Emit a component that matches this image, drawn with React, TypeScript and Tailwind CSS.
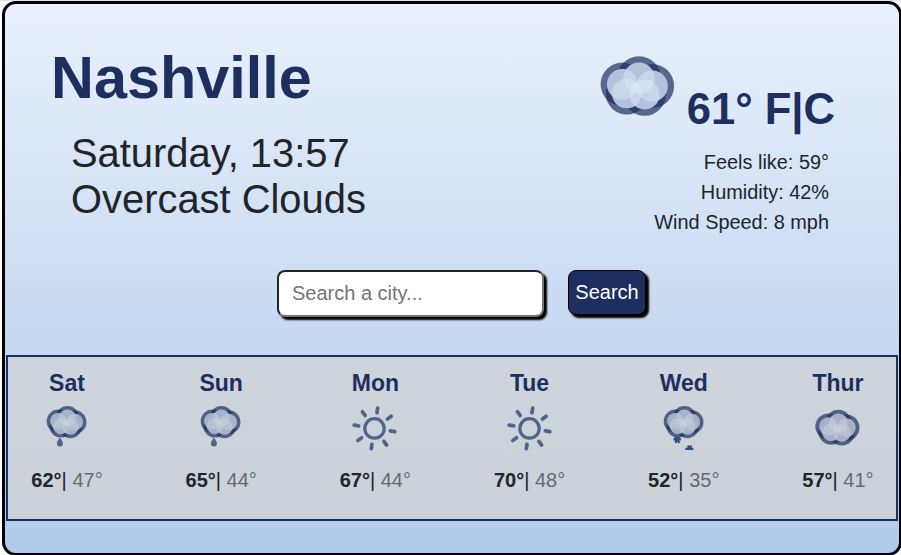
import React from "react";

const LOBES = [
  { x: 49, y: 33.3, r: 15.7 },
  { x: 32.3, y: 39.3, r: 15.4 },
  { x: 62.2, y: 41, r: 15.6 },
  { x: 36.8, y: 48.5, r: 14.8 },
  { x: 54.6, y: 49.5, r: 15 },
];

function Cloud({ size, className = "", dim = false, precipitation }: { size: number; className?: string; dim?: boolean; precipitation?: "rain" | "snow" }) {
  return (
    <svg width={size} height={size} viewBox="0 0 100 100" className={className}>
      {LOBES.map((c, i) => (
        <circle key={i} cx={c.x} cy={c.y} r={c.r + 6.3} fill="#1c2f5f" opacity={0.7} />
      ))}
      {LOBES.map((c, i) => (
        <circle key={i} cx={c.x} cy={c.y} r={c.r} fill={dim ? "#8492b0" : "#8d9dc0"} />
      ))}
      {LOBES.map((c, i) => (
        <circle key={i} cx={c.x} cy={c.y} r={c.r} fill={dim ? "#cdd4df" : "#e0eafa"} opacity={0.48} />
      ))}
      {precipitation === "rain" && <path d="M35 70c3 4 5.500 7 5.500 10.500a5.500 5.500 0 0 1-11 0c0-3.500 2.500-6.500 5.500-10.500Z" fill="#51658d" />}
      {precipitation === "snow" && (
        <g stroke="#344a79" strokeWidth="4">
          <path d="M28.500 73h14M32 67.500l7.500 12M39.500 67.500l-7.500 12" />
          <path d="M50.500 90.500h15M55 84.500l5.500 7.500M62 84.500l-5.500 7.500" />
        </g>
      )}
    </svg>
  );
}

function Sun() {
  return (
    <svg width="50" height="50" viewBox="0 0 50 50" fill="none" stroke="#506389">
      <g transform="translate(-0.5 0.4)">
        <circle cx="25" cy="25" r="9.7" strokeWidth="3.2" />
        <g transform="rotate(9 25 25)" strokeWidth="3.7" strokeLinecap="round">
          {[0, 45, 90, 135, 180, 225, 270, 315].map((a) => (
            <path key={a} d="M25 4.400V9" transform={`rotate(${a} 25 25)`} />
          ))}
        </g>
      </g>
    </svg>
  );
}

const DAYS = [
  { day: "Sat", icon: "rain", high: 62, low: 47 },
  { day: "Sun", icon: "rain", high: 65, low: 44 },
  { day: "Mon", icon: "sun", high: 67, low: 44 },
  { day: "Tue", icon: "sun", high: 70, low: 48 },
  { day: "Wed", icon: "snow", high: 52, low: 35 },
  { day: "Thur", icon: "cloud", high: 57, low: 41 },
];

function DayIcon({ kind }: { kind: string }) {
  if (kind === "sun") return <Sun />;
  if (kind === "cloud") return <Cloud size={60} dim className="ml-[3px] shrink-0" />;
  return <Cloud size={54} dim precipitation={kind === "rain" ? "rain" : "snow"} className="-mt-[3px] ml-[2px] shrink-0" />;
}

export default function App() {
  return (
    <div className="h-[555px] w-[901px] overflow-hidden border-t border-[#dee2e6] bg-white pl-[2px] font-['Liberation_Sans',Arial,sans-serif] text-[#212529]">
      <main className="flex h-[555px] w-[900px] flex-col rounded-[14px] border-[3px] border-black bg-[linear-gradient(#e9f0fc,#b0cbea)]">
        <header className="flex h-[266px] shrink-0 justify-between pr-[67px] pl-[46px]">
          <div className="pt-[40px]">
            <h1 className="text-[59.4px] leading-[68px] font-bold text-[#1c2f5f]">Nashville</h1>
            <div className="mt-[18px] pl-[20px] text-[39.9px] leading-[46px]">
              <p>Saturday, 13:57</p>
              <p>Overcast Clouds</p>
            </div>
          </div>
          <div className="flex flex-col items-end pt-[41px]">
            <div className="mr-[-3px] flex h-[102px]">
              <Cloud size={100} className="mr-[-3px] shrink-0" />
              <p className="pt-[38px] text-[43.6px] leading-[52px] font-bold text-[#1c2f5f]">61° F|C</p>
            </div>
            <div className="pr-[3px] text-right text-[19.9px] leading-[30px]">
              <p>Feels like: 59°</p>
              <p>Humidity: 42%</p>
              <p>Wind Speed: 8 mph</p>
            </div>
          </div>
        </header>
        <form className="flex h-[85px] shrink-0 items-start pl-[272px]">
          <input
            className="h-[47px] w-[267px] rounded-[8px] border-2 border-t-[#212529] border-r-[#767676] border-b-[#767676] border-l-[#212529] bg-white px-[13px] text-[20px] shadow-[3px_3px_2px_#000] placeholder:text-[#757575]"
            placeholder="Search a city..."
          />
          <button type="button" className="ml-[24px] h-[45px] w-[78px] rounded-[8px] border border-black bg-[#1c2f5f] pb-[1px] text-[20px] text-white shadow-[3px_3px_2px_#000]">
            Search
          </button>
        </form>
        <section className="mr-[1px] ml-[1px] flex h-[166px] shrink-0 justify-between border-2 border-[#1c2f5f] bg-[#d3d3d3]/70 pt-[12px] pr-[8px] pl-[9px]">
          {DAYS.map((d) => (
            <article key={d.day} className="flex w-[100px] flex-col items-center">
              <h2 className="text-[23px] leading-[28px] font-bold text-[#1c2f5f]">{d.day}</h2>
              <div className="flex h-[68px] items-start justify-center pt-[6px]">
                <DayIcon kind={d.icon} />
              </div>
              <p className="text-[20px] leading-[30px] whitespace-nowrap">
                <strong>{d.high}°</strong>|<span className="opacity-60"> {d.low}°</span>
              </p>
            </article>
          ))}
        </section>
      </main>
    </div>
  );
}
